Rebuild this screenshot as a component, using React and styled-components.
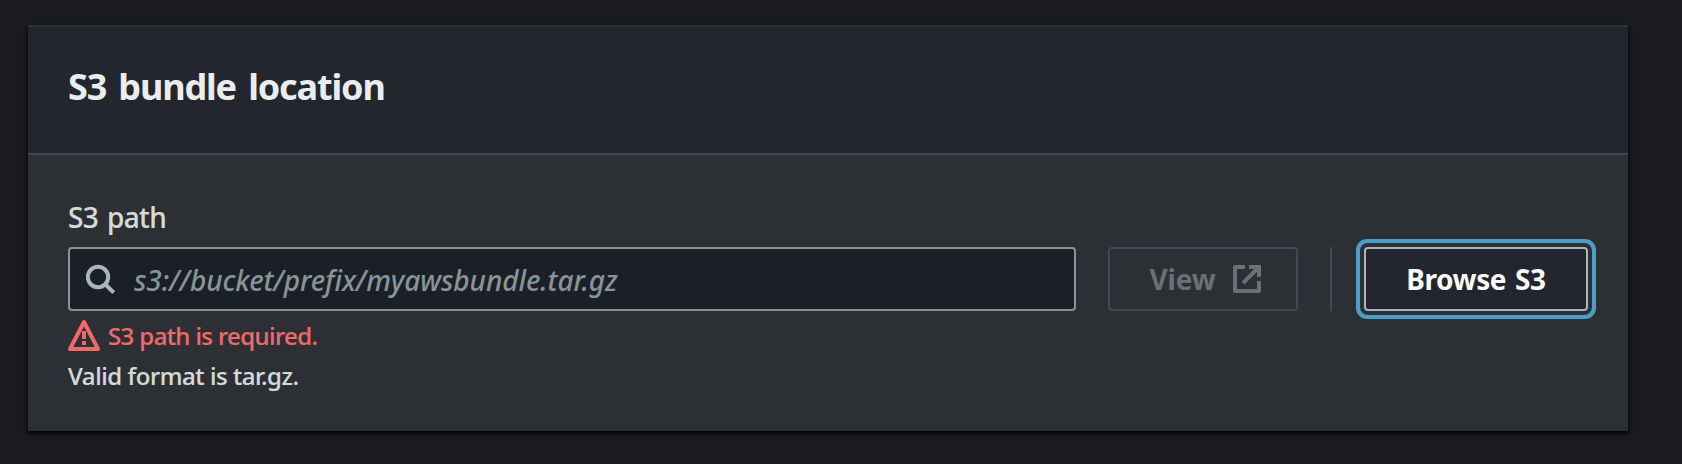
import React from 'react';
import styled, { createGlobalStyle, css } from 'styled-components';

const GlobalStyle = createGlobalStyle`
  *, *::before, *::after { box-sizing: border-box; }
  body {
    margin: 0;
    background: #1a1b1f;
    font-family: "Noto Sans", "Open Sans", sans-serif;
    color: #d5dbdb;
  }
`;

const Page = styled.main`
  min-height: 464px;
  padding: 25px 54px 33px 28px;
`;

const Panel = styled.section`
  height: 406px;
  background: #2c2f33;
  border-top: 2px solid #2c2f33;
  box-shadow: 0 2px 3px rgba(0, 0, 0, 0.6), 2px 2px 3px rgba(0, 0, 0, 0.35), -2px 2px 3px rgba(0, 0, 0, 0.35);
`;

const PanelHeader = styled.header`
  height: 128px;
  padding: 36px 40px 0;
  background: #23262e;
  border-bottom: 2px solid #444850;
`;

const Title = styled.h2`
  margin: 0;
  font-size: 36px;
  line-height: 48px;
  font-weight: 700;
  letter-spacing: -1.15px;
  word-spacing: 4px;
  color: #eaeded;
`;

const PanelBody = styled.div`
  padding: 40px 40px 0;
`;

const Label = styled.label`
  display: block;
  height: 44px;
  margin-bottom: 8px;
  font-size: 28px;
  line-height: 44px;
  font-weight: 500;
  letter-spacing: -0.6px;
  word-spacing: 2px;
  -webkit-text-stroke: 0.2px currentColor;
`;

const Controls = styled.div`
  display: flex;
  height: 64px;
`;

const InputBox = styled.div`
  display: flex;
  align-items: center;
  width: 1008px;
  padding-left: 16px;
  background: #1b1f27;
  border: 2px solid #879596;
  border-radius: 4px;
`;

const Input = styled.input`
  flex: 1;
  height: 60px;
  margin-left: 16px;
  padding: 1px 0 0;
  border: 0;
  outline: 0;
  background: transparent;
  font: italic 500 28px "Noto Sans", "Open Sans", sans-serif;
  letter-spacing: -0.09px;
  color: #d5dbdb;
  &::placeholder { color: #879596; opacity: 1; }
`;

const Button = styled.button`
  display: flex;
  align-items: center;
  justify-content: center;
  width: ${(p) => p.$width}px;
  height: 64px;
  padding: 0;
  border: 2px solid #aab7b8;
  border-radius: 4px;
  background: #23262e;
  color: #fafafa;
  font: 700 28px/40px "Noto Sans", "Open Sans", sans-serif;
  letter-spacing: ${(p) => p.$tracking}px;
  word-spacing: 2px;
  ${(p) => p.disabled && css`
    padding-left: 5px;
    background: transparent;
    border-color: #444850;
    color: #687078;
  `}
  ${(p) => p.$focused && css`
    box-shadow: 0 0 0 4px #2c2f33, 0 0 0 8px #489fc7;
  `}
  svg { margin-left: 18px; }
`;

const ViewSlot = styled.div`
  display: flex;
  margin: 0 32px;
`;

const BrowseSlot = styled.div`
  display: flex;
  padding-left: 32px;
  border-left: 2px solid #444850;
`;

const ErrorMessage = styled.div`
  display: flex;
  height: 40px;
  margin-top: 5px;
  gap: 8px;
  font-size: 24px;
  line-height: 40px;
  font-weight: 500;
  letter-spacing: -0.6px;
  color: #ee6a6b;
  -webkit-text-stroke: 0.2px currentColor;
  svg { margin-top: 3px; }
`;

const Hint = styled.div`
  font-size: 24px;
  line-height: 40px;
  font-weight: 500;
  letter-spacing: -0.42px;
  -webkit-text-stroke: 0.2px currentColor;
`;

const SearchIcon = () => (
  <svg width="32" height="32" viewBox="0 0 32 32" fill="none" stroke="#aab7b8" strokeWidth="4">
    <circle cx="12" cy="14" r="10.2" />
    <path d="M19 21l8.7 8.7" />
  </svg>
);

const ExternalIcon = () => (
  <svg width="28" height="28" viewBox="0 0 28 28" fill="none" stroke="#687078" strokeWidth="4">
    <path d="M12 2H2v24h24V16" strokeLinejoin="round" />
    <path d="M16 2h10v10M25 3L10 18" />
  </svg>
);

const WarningIcon = () => (
  <svg width="32" height="32" viewBox="0 0 32 32" fill="none" stroke="#ee6a6b" strokeWidth="4">
    <path d="M16 3L2 30h28z" strokeLinejoin="round" />
    <path d="M16 12v8M16 22v4" />
  </svg>
);

export default function App() {
  return (
    <>
      <GlobalStyle />
      <Page>
        <Panel>
          <PanelHeader>
            <Title>S3 bundle location</Title>
          </PanelHeader>
          <PanelBody>
            <Label htmlFor="path">S3 path</Label>
            <Controls>
              <InputBox>
                <SearchIcon />
                <Input id="path" placeholder="s3://bucket/prefix/myawsbundle.tar.gz" />
              </InputBox>
              <ViewSlot>
                <Button $width={190} $tracking={-0.2} disabled>
                  View
                  <ExternalIcon />
                </Button>
              </ViewSlot>
              <BrowseSlot>
                <Button $width={224} $tracking={-0.4} $focused>Browse S3</Button>
              </BrowseSlot>
            </Controls>
            <ErrorMessage>
              <WarningIcon />
              <span>S3 path is required.</span>
            </ErrorMessage>
            <Hint>Valid format is tar.gz.</Hint>
          </PanelBody>
        </Panel>
      </Page>
    </>
  );
}
